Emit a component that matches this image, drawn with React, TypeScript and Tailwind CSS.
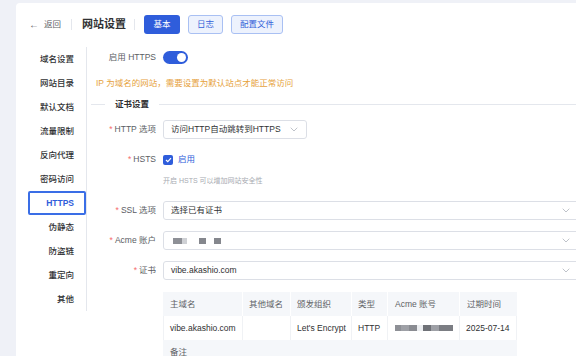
import React from "react";

const font = { fontFamily: '"Liberation Sans", "Noto Sans CJK SC", sans-serif' };

function Chevron() {
  return (
    <svg width="8" height="5" viewBox="0 0 8 5" fill="none" className="shrink-0">
      <path d="M0.7 0.7 L4 4 L7.3 0.7" stroke="#b8bcc4" strokeWidth="0.9" />
    </svg>
  );
}

function Select({ children, w }: { children?: React.ReactNode; w: string }) {
  return (
    <div className={`${w} h-[19px] border border-[#dcdfe6] rounded-[3px] flex items-center justify-between pl-[7px] pr-[8px] bg-white shrink-0`}>
      <div className="flex items-center text-[8.5px] text-[#303133] whitespace-nowrap">{children}</div>
      <Chevron />
    </div>
  );
}

function Label({ text }: { text: string }) {
  return (
    <div className="w-[65px] shrink-0 text-right text-[8.5px] text-[#5a5d63] whitespace-nowrap">
      <span className="text-[#f56c6c] mr-[2px]">*</span>
      {text}
    </div>
  );
}

const sideItems = ["域名设置", "网站目录", "默认文档", "流量限制", "反向代理", "密码访问", "HTTPS", "伪静态", "防盗链", "重定向", "其他"];

export default function App() {
  return (
    <div className="w-[576px] h-[356px] overflow-hidden bg-[#eff1f7] pl-[16px] pt-[3px]" style={font}>
      <div className="w-[570px] h-[360px] bg-white rounded-tl-[4px] overflow-hidden">
        {/* header */}
        <div className="flex items-center h-[38px] pt-[5px] pl-[13px] whitespace-nowrap">
          <span className="text-[10px] text-[#606266] mr-[5px]">←</span>
          <span className="text-[8.5px] text-[#606266]">返回</span>
          <div className="w-px h-[11px] bg-[#e4e7ed] ml-[10px] mr-[10px]" />
          <span className="text-[11px] font-bold text-[#303133]">网站设置</span>
          <div className="w-px h-[11px] bg-[#e4e7ed] ml-[8px] mr-[9px]" />
          <div className="h-[19px] w-[36px] rounded-[3px] bg-[#2f5ddb] text-white text-[8.5px] flex items-center justify-center">基本</div>
          <div className="h-[19px] w-[35px] ml-[8px] rounded-[3px] bg-[#edf2fd] border border-[#a9c0f3] text-[#3362d9] text-[8.5px] flex items-center justify-center">日志</div>
          <div className="h-[19px] w-[52px] ml-[8px] rounded-[3px] bg-[#edf2fd] border border-[#a9c0f3] text-[#3362d9] text-[8.5px] flex items-center justify-center">配置文件</div>
        </div>
        {/* body */}
        <div className="flex mt-[6px]">
          <div className="w-[71px] shrink-0 h-[264px] border-r border-[#e4e7ed] flex flex-col pl-[12px]">
            {sideItems.map((s) =>
              s === "HTTPS" ? (
                <div key={s} className="h-[24px] w-[58px] border-2 border-[#3a6ee6] rounded-[2px] flex items-center justify-end pr-[10px] text-[8.5px] font-bold text-[#2f5ddb]">
                  {s}
                </div>
              ) : (
                <div key={s} className="h-[24px] w-[58px] flex items-center justify-end pr-[12px] text-[8.5px] font-medium text-[#303133]">
                  {s}
                </div>
              )
            )}
          </div>
          <div className="flex-1 flex flex-col pl-[4px]">
            <div className="flex items-center h-[20px]">
              <div className="w-[65px] shrink-0 text-right text-[8.5px] text-[#5a5d63]">启用 HTTPS</div>
              <div className="ml-[7px] w-[25px] h-[13px] rounded-full bg-[#2f5ddb] flex items-center justify-end pr-[2px]">
                <div className="w-[9px] h-[9px] rounded-full bg-white" />
              </div>
            </div>
            <div className="mt-[6px] h-[20px] flex items-center pl-[5px] text-[8.5px] text-[#e6a23c] whitespace-nowrap">
              IP 为域名的网站，需要设置为默认站点才能正常访问
            </div>
            <div className="mt-[1px] h-[20px] flex items-center">
              <div className="w-[14px] h-px bg-[#e4e7ed]" />
              <span className="px-[10px] text-[8.5px] font-bold text-[#303133]">证书设置</span>
              <div className="flex-1 h-px bg-[#e4e7ed]" />
            </div>
            <div className="mt-[6px] flex items-center h-[19px]">
              <Label text="HTTP 选项" />
              <div className="ml-[7px]">
                <Select w="w-[144px]">访问HTTP自动跳转到HTTPS</Select>
              </div>
            </div>
            <div className="mt-[11px] flex items-center h-[19px]">
              <Label text="HSTS" />
              <div className="ml-[7px] flex items-center">
                <div className="w-[10px] h-[10px] rounded-[2px] bg-[#2f5ddb] flex items-center justify-center">
                  <svg width="7" height="6" viewBox="0 0 7 6" fill="none">
                    <path d="M1 3 L2.8 4.7 L6 1.2" stroke="white" strokeWidth="1.2" />
                  </svg>
                </div>
                <span className="ml-[5px] text-[8.5px] text-[#2f5ddb]">启用</span>
              </div>
            </div>
            <div className="mt-[2px] h-[20px] flex items-center pl-[72px] text-[7px] text-[#a8abb2] whitespace-nowrap">
              开启 HSTS 可以增加网站安全性
            </div>
            <div className="mt-[10px] flex items-center h-[19px]">
              <Label text="SSL 选项" />
              <div className="ml-[7px]">
                <Select w="w-[416px]">选择已有证书</Select>
              </div>
            </div>
            <div className="mt-[11px] flex items-center h-[19px]">
              <Label text="Acme 账户" />
              <div className="ml-[7px]">
                <Select w="w-[416px]">
                  <div className="flex items-center ml-[2px]">
                    <div className="w-[9px] h-[6px] bg-[#8e9096]" />
                    <div className="w-[5px] h-[6px] bg-[#cfd1d5]" />
                    <div className="w-[7px] h-[6px] bg-[#85878d] ml-[12px]" />
                    <div className="w-[7px] h-[6px] bg-[#85878d] ml-[8px]" />
                  </div>
                </Select>
              </div>
            </div>
            <div className="mt-[11px] flex items-center h-[19px]">
              <Label text="证书" />
              <div className="ml-[7px]">
                <Select w="w-[416px]">vibe.akashio.com</Select>
              </div>
            </div>
            <div className="mt-[12px] ml-[72px] w-[354px] text-[8.5px] text-[#303133] whitespace-nowrap">
              <div className="flex h-[24px] bg-[#f5f7fa] text-[#606266]">
                <div className="w-[80px] flex items-center pl-[7px] border-r border-white">主域名</div>
                <div className="w-[48px] flex items-center pl-[6px] border-r border-white">其他域名</div>
                <div className="w-[61px] flex items-center pl-[6px] border-r border-white">颁发组织</div>
                <div className="w-[36px] flex items-center pl-[6px] border-r border-white">类型</div>
                <div className="w-[72px] flex items-center pl-[7px] border-r border-white">Acme 账号</div>
                <div className="flex-1 flex items-center pl-[7px]">过期时间</div>
              </div>
              <div className="flex h-[24px] bg-white border-l border-r border-[#f0f2f5]">
                <div className="w-[79px] flex items-center pl-[6px] border-r border-[#f0f2f5]">vibe.akashio.com</div>
                <div className="w-[48px] border-r border-[#f0f2f5]" />
                <div className="w-[61px] flex items-center pl-[6px] border-r border-[#f0f2f5]">Let's Encrypt</div>
                <div className="w-[36px] flex items-center pl-[6px] border-r border-[#f0f2f5]">HTTP</div>
                <div className="w-[72px] flex items-center pl-[7px] border-r border-[#f0f2f5]">
                  <div className="w-[6px] h-[6px] bg-[#8e9096]" />
                  <div className="w-[8px] h-[6px] bg-[#9ea0a6]" />
                  <div className="w-[8px] h-[6px] bg-[#8a8c92]" />
                  <div className="w-[6px] h-[6px] bg-[#eceef1]" />
                  <div className="w-[8px] h-[6px] bg-[#6f7177]" />
                  <div className="w-[8px] h-[6px] bg-[#9ea0a6]" />
                  <div className="w-[14px] h-[6px] bg-[#7b7d83]" />
                </div>
                <div className="flex-1 flex items-center pl-[6px]">2025-07-14</div>
              </div>
              <div className="flex h-[24px] bg-[#f5f7fa] items-center pl-[7px] text-[#606266]">备注</div>
            </div>
          </div>
        </div>
      </div>
    </div>
  );
}
